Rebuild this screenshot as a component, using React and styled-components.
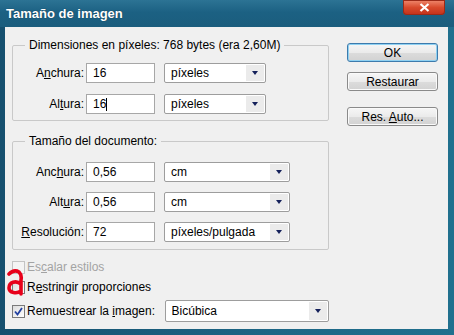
import React from 'react';
import styled, { createGlobalStyle } from 'styled-components';

const Global = createGlobalStyle`
    body {
        margin: 0;
        font-family: "Liberation Sans", Arial, sans-serif;
        font-size: 12px;
        color: #000;
    }
`;

const Frame = styled.div`
    width: 454px;
    height: 335px;
    box-sizing: border-box;
    display: flex;
    flex-direction: column;
    background: linear-gradient(90deg, #16506f 0%, #1d6685 60%, #20708e 100%);
    padding: 0 6px 6px 5px;
    overflow: hidden;
`;

const TitleBar = styled.div`
    height: 27px;
    display: flex;
    align-items: flex-start;
    justify-content: space-between;
    margin-left: -5px;
    margin-right: -6px;
    padding-left: 6px;
    padding-right: 9px;
    background: linear-gradient(180deg, #2c7394 0%, #1c6183 45%, #1b5d7d 100%);
`;

const Title = styled.span`
    color: #fff;
    font-weight: bold;
    font-size: 13px;
    line-height: 27px;
    text-shadow: 0 0 1px #0b2e44;
`;

const CloseBtn = styled.div`
    width: 42px;
    height: 15px;
    border-radius: 0 0 4px 4px;
    background: linear-gradient(180deg, #f08a6f 0%, #d84a2c 50%, #c1301a 100%);
    box-shadow: inset 0 0 0 1px #9a2a18;
    display: flex;
    align-items: center;
    justify-content: center;
`;

const Body = styled.div`
    flex: 1;
    display: flex;
    background: #f0f0f0;
    padding: 11px 10px 0 7px;
`;

const LeftCol = styled.div`
    width: 317px;
    display: flex;
    flex-direction: column;
`;

const RightCol = styled.div`
    margin-left: 18px;
    padding-top: 5px;
    display: flex;
    flex-direction: column;
`;

const Group = styled.fieldset`
    margin: ${p => p.$top || 0}px 0 0 0;
    padding: ${p => p.$pt}px 0 ${p => p.$pb}px 0;
    border: 1px solid #c9c9c9;
    border-radius: 2px;
    display: flex;
    flex-direction: column;
    gap: ${p => p.$gap}px;
`;

const Legend = styled.legend`
    margin-left: 12px;
    padding: 0 4px;
    line-height: 14px;
    font-size: 12px;
`;

const Row = styled.div`
    display: flex;
    align-items: center;
    height: 20px;
`;

const Label = styled.label`
    width: 73px;
    box-sizing: border-box;
    padding-right: 2px;
    text-align: right;
`;

const U = styled.span`
    text-decoration: underline;
`;

const Input = styled.div`
    width: 69px;
    height: 20px;
    box-sizing: border-box;
    border: 1px solid #a7a7a7;
    background: #fff;
    padding-left: 6px;
    line-height: 18px;
    display: flex;
    align-items: center;
`;

const Caret = styled.span`
    display: inline-block;
    width: 1px;
    height: 13px;
    background: #000;
`;

const Select = styled.div`
    width: ${p => p.$w}px;
    height: ${p => p.$h || 20}px;
    margin-left: ${p => p.$ml || 0}px;
    box-sizing: border-box;
    border: 1px solid #9d9d9d;
    border-radius: 2px;
    background: #fff;
    display: flex;
    align-items: stretch;
`;

const SelectText = styled.span`
    flex: 1;
    padding-left: 6px;
    display: flex;
    align-items: center;
`;

const Arrow = styled.span`
    width: 18px;
    margin: 1px;
    background: #ebebeb;
    display: flex;
    align-items: center;
    justify-content: center;
    &::after {
        content: '';
        border-left: 3px solid transparent;
        border-right: 3px solid transparent;
        border-top: 4px solid #14205a;
    }
`;

const CheckRow = styled.div`
    position: relative;
    display: flex;
    align-items: center;
    height: ${p => p.$h || 20}px;
    margin-top: ${p => p.$mt || 0}px;
    color: ${p => (p.$disabled ? '#a3a3a3' : '#000')};
`;

const Box = styled.span`
    width: 13px;
    height: 13px;
    box-sizing: border-box;
    border: 1px solid ${p => (p.$disabled ? '#c4c4c4' : '#7a7a7a')};
    background: ${p => (p.$disabled ? '#f4f4f4' : 'linear-gradient(135deg, #dcdcdc, #fff)')};
    margin-right: 2px;
    display: flex;
    align-items: center;
    justify-content: center;
`;

const CheckLabel = styled.span`
    width: ${p => (p.$w ? `${p.$w}px` : 'auto')};
`;

const Scribble = styled.svg`
    position: absolute;
    left: -6px;
    top: -8px;
`;

const Button = styled.div`
    width: 91px;
    height: 19px;
    box-sizing: border-box;
    margin-top: ${p => p.$mt || 0}px;
    border: 1px solid ${p => (p.$focus ? '#3d7bad' : '#8a8a8a')};
    border-radius: 3px;
    background: linear-gradient(180deg, #f6f6f6 0%, #ebebeb 50%, #dcdcdc 51%, #d2d2d2 100%);
    box-shadow: ${p => (p.$focus ? 'inset 0 0 0 1px #8fd1f2' : 'inset 0 0 0 1px #fafafa')};
    display: flex;
    align-items: center;
    justify-content: center;
`;

const Field = ({ label, value, unit, selW, caret }) => (
    <Row>
        <Label>{label}</Label>
        <Input>{value}{caret && <Caret />}</Input>
        <Select $w={selW} $ml={9}>
            <SelectText>{unit}</SelectText>
            <Arrow />
        </Select>
    </Row>
);

const Check = () => (
    <svg width="9" height="9" viewBox="0 0 9 9">
        <path d="M1 4.5 L3.5 7.5 L8 1" fill="none" stroke="#2140a0" strokeWidth="1.8" />
    </svg>
);

const App = () => (
    <>
        <Global />
        <Frame>
            <TitleBar>
                <Title>Tamaño de imagen</Title>
                <CloseBtn>
                    <svg width="11" height="9" viewBox="0 0 11 9">
                        <path d="M1.5 1 L9.5 8 M9.5 1 L1.5 8" stroke="#fff" strokeWidth="2.2" />
                    </svg>
                </CloseBtn>
            </TitleBar>
            <Body>
                <LeftCol>
                    <Group $pt={11} $pb={6} $gap={11}>
                        <Legend>Dimensiones en píxeles: 768 bytes (era 2,60M)</Legend>
                        <Field label={<>A<U>n</U>chura:</>} value="16" unit="píxeles" selW={102} />
                        <Field label={<>Al<U>t</U>ura:</>} value="16" unit="píxeles" selW={102} caret />
                    </Group>
                    <Group $top={13} $pt={14} $pb={7} $gap={10}>
                        <Legend>Tamaño del documento:</Legend>
                        <Field label={<>Anc<U>h</U>ura:</>} value="0,56" unit="cm" selW={126} />
                        <Field label={<>Alt<U>u</U>ra:</>} value="0,56" unit="cm" selW={126} />
                        <Field label={<><U>R</U>esolución:</>} value="72" unit="píxeles/pulgada" selW={126} />
                    </Group>
                    <CheckRow $mt={7} $disabled>
                        <Box $disabled />
                        <CheckLabel>Es<U>c</U>alar estilos</CheckLabel>
                    </CheckRow>
                    <CheckRow>
                        <Box />
                        <CheckLabel>R<U>e</U>stringir proporciones</CheckLabel>
                        <Scribble width="22" height="28" viewBox="0 0 22 28">
                            <path
                                d="M3 5 Q 8 0 13 3 Q 16 6 15 11 L 15 25 M 15 15 C 10 11, 3 13, 3 19 C 3 24, 11 25, 15 22"
                                fill="none"
                                stroke="#e8001a"
                                strokeWidth="3.6"
                                strokeLinecap="round"
                                strokeLinejoin="round"
                            />
                        </Scribble>
                    </CheckRow>
                    <CheckRow $mt={3} $h={22}>
                        <Box><Check /></Box>
                        <CheckLabel $w={138}>Remuestrear la <U>i</U>magen:</CheckLabel>
                        <Select $w={165} $h={22}>
                            <SelectText>Bicúbica</SelectText>
                            <Arrow />
                        </Select>
                    </CheckRow>
                </LeftCol>
                <RightCol>
                    <Button $focus>OK</Button>
                    <Button $mt={10}>Restaurar</Button>
                    <Button $mt={16}><span>Res. <U>A</U>uto...</span></Button>
                </RightCol>
            </Body>
        </Frame>
    </>
);

export default App;
